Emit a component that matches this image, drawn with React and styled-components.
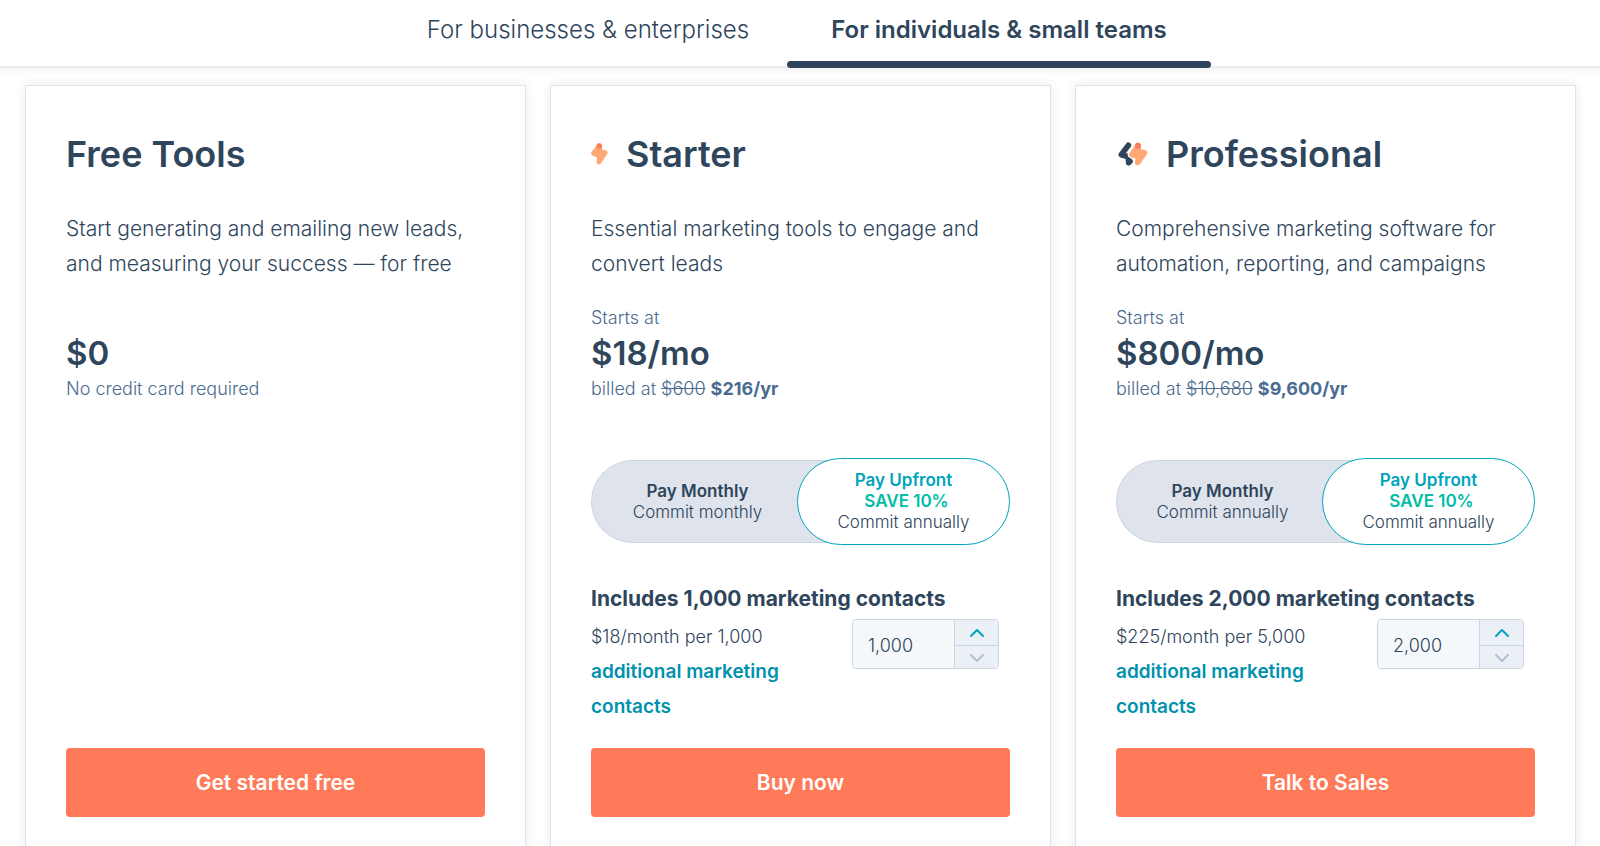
import React, { useState } from "react";
import styled, { createGlobalStyle } from "styled-components";
import { ChevronDown, ChevronUp } from "lucide-react";

const color = {
  ink: "#2e455c",
  muted: "#4b6b90",
  border: "#dfe3eb",
  control: "#cbd6e2",
  teal: "#00a4bd",
  link: "#0091ae",
  green: "#00bda5",
  orange: "#ff7a59",
  peach: "#ffa876",
};

const GlobalStyle = createGlobalStyle`
  *, *::before, *::after { box-sizing: border-box; }
  body {
    margin: 0;
    background: #fff;
    color: ${color.ink};
    font-family: Inter, "Open Sans", sans-serif;
    font-weight: 350;
  }
  button, input { font: inherit; color: inherit; }
  button { cursor: pointer; }
`;

const Header = styled.header`
  position: relative;
  display: flex;
  justify-content: center;
  border-bottom: 2px solid #ebebeb;
  box-shadow: 0 2px 8px rgba(0, 0, 0, 0.06);
`;

const Tabs = styled.nav`
  display: grid;
  grid-template-columns: 398px 424px;
`;

const Tab = styled.button`
  position: relative;
  border: 0;
  background: none;
  padding: 14px 0 20px;
  font-size: 24px;
  line-height: 32px;
  white-space: nowrap;
  font-weight: ${(p) => (p.$active ? 600 : 300)};

  &::after {
    content: "";
    display: ${(p) => (p.$active ? "block" : "none")};
    position: absolute;
    left: 0;
    right: 0;
    bottom: -2px;
    height: 7px;
    border-radius: 4px;
    background: ${color.ink};
  }
`;

const Plans = styled.main`
  display: grid;
  grid-template-columns: repeat(3, minmax(0, 1fr));
  gap: 24px;
  padding: 17px 24px 24px 25px;
`;

const Card = styled.section`
  display: flex;
  flex-direction: column;
  padding: 44px 40px 40px;
  border: 1px solid ${color.border};
  background: #fff;
  box-shadow: 0 0 10px rgba(45, 62, 80, 0.1);
`;

const Title = styled.h2`
  display: flex;
  align-items: center;
  gap: 18px;
  margin: 0 0 33px;
  font-size: 36px;
  line-height: 48px;
  font-weight: 600;

  svg { flex: none; }
`;

const Description = styled.p`
  margin: 0 0 24px;
  font-size: 21px;
  line-height: 35px;
`;

const PriceNote = styled.p`
  margin: 0;
  min-height: 26px;
  color: ${color.muted};
  font-size: 18px;
  line-height: 26px;

  strong { font-weight: 700; }
`;

const Price = styled.p`
  margin: 0;
  font-size: 33px;
  line-height: 45px;
  font-weight: 600;
`;

const Billing = styled.div`
  display: flex;
  align-items: center;
  margin: 56px 0 38px;
`;

const BillingOption = styled.button`
  display: flex;
  flex-direction: column;
  align-items: center;
  justify-content: center;
  font-size: 17px;
  line-height: 21px;
`;

const Monthly = styled(BillingOption)`
  flex: 1;
  height: 83px;
  padding: 0 47px 0 0;
  border: 1px solid ${color.control};
  border-right: 0;
  border-radius: 42px 0 0 42px;
  background: ${color.border};
`;

const Upfront = styled(BillingOption)`
  position: relative;
  flex: none;
  width: 213px;
  height: 87px;
  margin-left: -53px;
  padding: 0;
  border: 1px solid ${color.teal};
  border-radius: 44px;
  background: #fff;
`;

const OptionName = styled.span`
  font-weight: 600;
  color: ${(p) => (p.$selected ? color.teal : "inherit")};
`;

const Saving = styled.span`
  padding-left: 6px;
  font-weight: 600;
  color: ${color.green};
`;

const ContactsTitle = styled.h3`
  margin: 0 0 4px;
  font-size: 21px;
  line-height: 32px;
  font-weight: 700;
`;

const Contacts = styled.div`
  display: flex;
  align-items: flex-start;
  justify-content: space-between;
  margin-bottom: 24px;
  padding-right: 11px;
`;

const ContactsRate = styled.p`
  width: 220px;
  margin: 0;
  font-size: 18px;
  line-height: 35px;
`;

const ContactsLink = styled.a`
  color: ${color.link};
  font-size: 19px;
  font-weight: 600;
  text-decoration: none;
`;

const Stepper = styled.div`
  display: grid;
  grid-template-columns: 102px 43px;
  height: 50px;
  overflow: hidden;
  border: 1px solid ${color.control};
  border-radius: 4px;
`;

const StepperInput = styled.input`
  min-width: 0;
  width: 100%;
  border: 0;
  border-right: 1px solid ${color.control};
  background: #f5f8fa;
  padding: 0 15px;
  font-size: 18px;
`;

const StepperButtons = styled.div`
  display: grid;
  grid-template-rows: 1fr 1fr;
`;

const StepButton = styled.button`
  display: flex;
  align-items: center;
  justify-content: center;
  border: 0;
  padding: 0;
  background: #eaf0f6;
  color: ${color.teal};

  & + & { border-top: 1px solid ${color.control}; }
  &:disabled { color: #b0c1d4; }
`;

const Action = styled.button`
  margin-top: auto;
  height: 69px;
  border: 0;
  border-radius: 4px;
  background: ${color.orange};
  color: #fff;
  font-size: 21px;
  font-weight: 600;
`;

function StarterIcon() {
  return (
    <svg width="17" height="22" viewBox="0 0 51 66" aria-hidden="true">
      <path d="M25 9 8 31 25 37 24 57 42 29 27 24Z" fill={color.peach} stroke={color.peach} strokeWidth="15" strokeLinejoin="round" />
      <circle cx="25" cy="9" r="8" fill={color.orange} />
    </svg>
  );
}

function ProfessionalIcon() {
  return (
    <svg width="32" height="24" viewBox="0 0 96 72" aria-hidden="true">
      <path d="M37 10 16 38 37 44 38 62" fill="none" stroke={color.ink} strokeWidth="17" strokeLinejoin="round" strokeLinecap="round" />
      <path d="M38 62 43 58" fill="none" stroke={color.ink} strokeWidth="15" strokeLinecap="round" />
      <path d="M66 10 47 38 67 44 65 62 86 32 68 28Z" fill="#fff" stroke="#fff" strokeWidth="23" strokeLinejoin="round" />
      <path d="M66 10 47 38 67 44 65 62 86 32 68 28Z" fill={color.peach} stroke={color.peach} strokeWidth="16" strokeLinejoin="round" />
      <circle cx="66" cy="11" r="9" fill={color.orange} />
    </svg>
  );
}

const plans = [
  {
    id: "free",
    name: "Free Tools",
    description: "Start generating and emailing new leads, and measuring your success — for free",
    price: "$0",
    note: "No credit card required",
    action: "Get started free",
  },
  {
    id: "starter",
    name: "Starter",
    Icon: StarterIcon,
    description: "Essential marketing tools to engage and convert leads",
    lead: "Starts at",
    price: "$18/mo",
    was: "$600",
    now: "$216/yr",
    commit: "Commit monthly",
    contacts: 1000,
    step: 1000,
    rate: "$18/month per 1,000",
    action: "Buy now",
  },
  {
    id: "professional",
    name: "Professional",
    Icon: ProfessionalIcon,
    description: "Comprehensive marketing software for automation, reporting, and campaigns",
    lead: "Starts at",
    price: "$800/mo",
    was: "$10,680",
    now: "$9,600/yr",
    commit: "Commit annually",
    contacts: 2000,
    step: 5000,
    rate: "$225/month per 5,000",
    action: "Talk to Sales",
  },
];

const format = (n) => n.toLocaleString("en-US");

function ContactOptions({ plan }) {
  const [count, setCount] = useState(plan.contacts);
  return (
    <>
      <Billing role="group" aria-label="Billing period">
        <Monthly type="button" aria-pressed="false">
          <OptionName>Pay Monthly</OptionName>
          <span>{plan.commit}</span>
        </Monthly>
        <Upfront type="button" aria-pressed="true">
          <OptionName $selected>Pay Upfront</OptionName>
          <Saving>SAVE 10%</Saving>
          <span>Commit annually</span>
        </Upfront>
      </Billing>
      <ContactsTitle id={`${plan.id}-contacts`}>
        Includes {format(plan.contacts)} marketing contacts
      </ContactsTitle>
      <Contacts>
        <ContactsRate>
          {plan.rate} <ContactsLink href="#contacts">additional marketing contacts</ContactsLink>
        </ContactsRate>
        <Stepper>
          <StepperInput type="text" readOnly value={format(count)} aria-labelledby={`${plan.id}-contacts`} />
          <StepperButtons>
            <StepButton type="button" aria-label="Increase" onClick={() => setCount(count + plan.step)}>
              <ChevronUp size={24} strokeWidth={2} />
            </StepButton>
            <StepButton
              type="button"
              aria-label="Decrease"
              disabled={count <= plan.contacts}
              onClick={() => setCount(count - plan.step)}
            >
              <ChevronDown size={24} strokeWidth={2} />
            </StepButton>
          </StepperButtons>
        </Stepper>
      </Contacts>
    </>
  );
}

function PlanCard({ plan }) {
  const { Icon } = plan;
  return (
    <Card>
      <Title>
        {Icon && <Icon />}
        {plan.name}
      </Title>
      <Description>{plan.description}</Description>
      <PriceNote>{plan.lead}</PriceNote>
      <Price>{plan.price}</Price>
      <PriceNote>
        {plan.note || (
          <>
            billed at <s>{plan.was}</s> <strong>{plan.now}</strong>
          </>
        )}
      </PriceNote>
      {plan.contacts && <ContactOptions plan={plan} />}
      <Action type="button">{plan.action}</Action>
    </Card>
  );
}

export default function App() {
  const [tab, setTab] = useState("individuals");
  return (
    <>
      <GlobalStyle />
      <Header>
        <Tabs aria-label="Audience">
          <Tab type="button" $active={tab === "businesses"} onClick={() => setTab("businesses")}>
            For businesses &amp; enterprises
          </Tab>
          <Tab type="button" $active={tab === "individuals"} onClick={() => setTab("individuals")}>
            For individuals &amp; small teams
          </Tab>
        </Tabs>
      </Header>
      <Plans>
        {plans.map((plan) => (
          <PlanCard key={plan.id} plan={plan} />
        ))}
      </Plans>
    </>
  );
}
